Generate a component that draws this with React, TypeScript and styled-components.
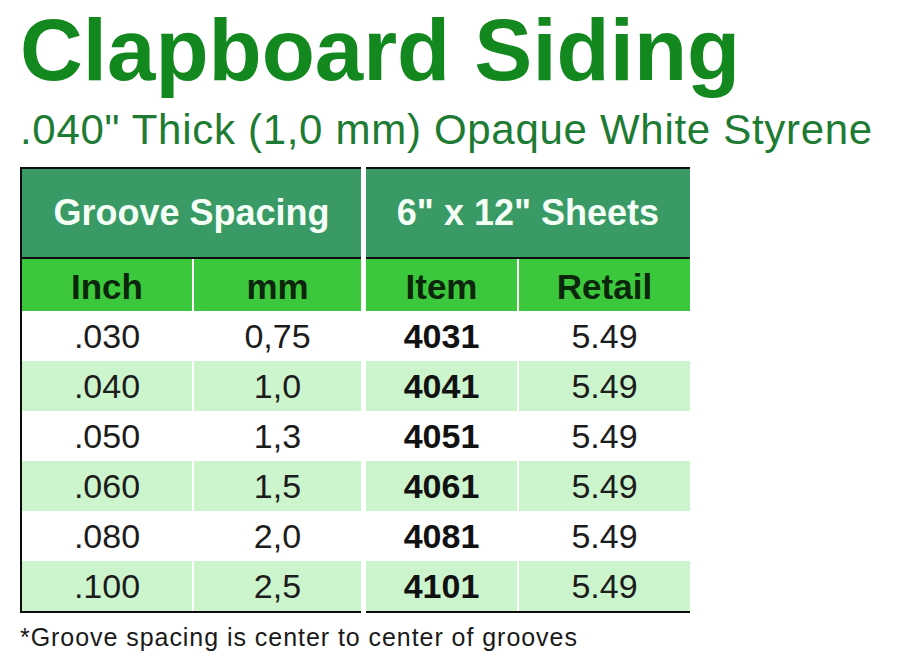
import React from "react";
import styled, { createGlobalStyle } from "styled-components";

const GlobalStyle = createGlobalStyle`
  html, body {
    margin: 0;
    padding: 0;
    background: #ffffff;
  }
  body {
    font-family: "Liberation Sans", Arial, Helvetica, sans-serif;
  }
`;

const Page = styled.div`
  width: 900px;
  height: 667px;
  padding-left: 20px;
  box-sizing: border-box;
  display: flex;
  flex-direction: column;
  background: #ffffff;
  overflow: hidden;
`;

const Title = styled.h1`
  margin: 0;
  font-size: 87px;
  line-height: 100px;
  font-weight: 700;
  color: #12881f;
  white-space: nowrap;
`;

const Subtitle = styled.h2`
  margin: 5px 0 0 0;
  font-size: 42px;
  line-height: 50px;
  font-weight: 400;
  color: #1d7b33;
  letter-spacing: 0.7px;
  white-space: nowrap;
`;

const Table = styled.div`
  margin-top: 12px;
  display: flex;
  gap: 5px;
  align-items: flex-start;
`;

const Group = styled.div<{ $cols: string; $leftBorder?: boolean }>`
  display: grid;
  grid-template-columns: ${(p) => p.$cols};
  column-gap: 2px;
  background: #ffffff;
  border-top: 2px solid #0d0d0d;
  border-bottom: 2px solid #0d0d0d;
  border-left: ${(p) => (p.$leftBorder ? "2px solid #0d0d0d" : "none")};
`;

const GroupHeader = styled.div`
  grid-column: 1 / -1;
  height: 88px;
  background: #3a9a66;
  border-bottom: 2px solid #0d0d0d;
  display: flex;
  align-items: center;
  justify-content: center;
  color: #f4fff6;
  font-size: 36px;
  font-weight: 700;
  white-space: nowrap;
`;

const SubHeader = styled.div`
  height: 52px;
  background: #3cc83c;
  display: flex;
  align-items: center;
  justify-content: center;
  padding-top: 4px;
  box-sizing: border-box;
  color: #0c260c;
  font-size: 35px;
  font-weight: 700;
`;

const Cell = styled.div<{ $shade: boolean; $bold?: boolean }>`
  height: 50px;
  background: ${(p) => (p.$shade ? "#cdf5cd" : "#ffffff")};
  display: flex;
  align-items: center;
  justify-content: center;
  color: ${(p) => (p.$bold ? "#111111" : "#1c1c1c")};
  font-size: 34px;
  font-weight: ${(p) => (p.$bold ? 700 : 400)};
`;

const Footnote = styled.p`
  margin: 10px 0 0 0;
  font-size: 25px;
  line-height: 29px;
  color: #1a1a1a;
  letter-spacing: 0.95px;
  white-space: nowrap;
`;

const rows = [
  { inch: ".030", mm: "0,75", item: "4031", retail: "5.49" },
  { inch: ".040", mm: "1,0", item: "4041", retail: "5.49" },
  { inch: ".050", mm: "1,3", item: "4051", retail: "5.49" },
  { inch: ".060", mm: "1,5", item: "4061", retail: "5.49" },
  { inch: ".080", mm: "2,0", item: "4081", retail: "5.49" },
  { inch: ".100", mm: "2,5", item: "4101", retail: "5.49" },
];

export default function App() {
  return (
    <Page>
      <GlobalStyle />
      <Title>Clapboard Siding</Title>
      <Subtitle>.040" Thick (1,0 mm) Opaque White Styrene</Subtitle>
      <Table>
        <Group $cols="170px 167px" $leftBorder>
          <GroupHeader>Groove Spacing</GroupHeader>
          <SubHeader>Inch</SubHeader>
          <SubHeader>mm</SubHeader>
          {rows.map((r, i) => (
            <React.Fragment key={r.inch}>
              <Cell $shade={i % 2 === 1}>{r.inch}</Cell>
              <Cell $shade={i % 2 === 1}>{r.mm}</Cell>
            </React.Fragment>
          ))}
        </Group>
        <Group $cols="151px 171px">
          <GroupHeader>6" x 12" Sheets</GroupHeader>
          <SubHeader>Item</SubHeader>
          <SubHeader>Retail</SubHeader>
          {rows.map((r, i) => (
            <React.Fragment key={r.item}>
              <Cell $shade={i % 2 === 1} $bold>
                {r.item}
              </Cell>
              <Cell $shade={i % 2 === 1}>{r.retail}</Cell>
            </React.Fragment>
          ))}
        </Group>
      </Table>
      <Footnote>*Groove spacing is center to center of grooves</Footnote>
    </Page>
  );
}
